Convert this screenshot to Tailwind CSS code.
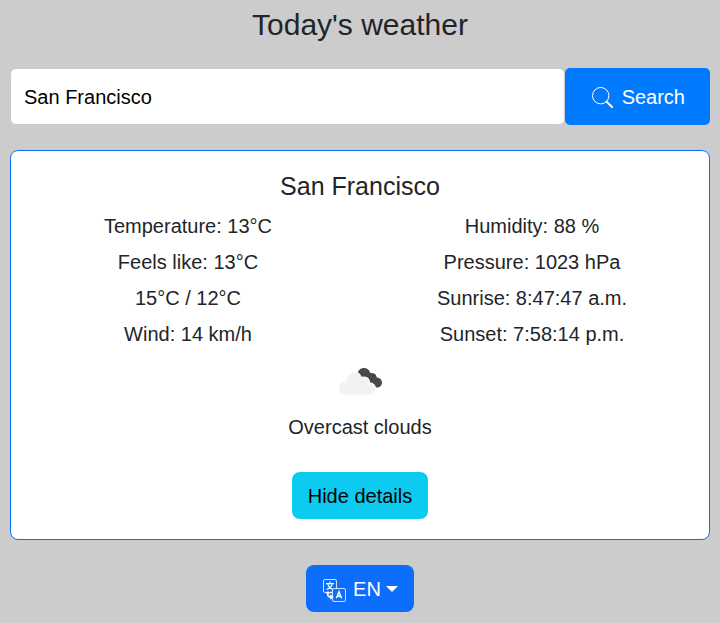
<!DOCTYPE html>
<html lang="en">
<head>
<meta charset="utf-8">
<meta name="viewport" content="width=device-width, initial-scale=1">
<title>Today's weather</title>
<script src="https://cdn.jsdelivr.net/npm/@tailwindcss/browser@4"></script>
</head>
<body class="min-h-screen bg-[#ccc] px-2.5 pt-[7px] pb-2.5 font-['Liberation_Sans',Arial,sans-serif] text-xl text-[#212529]">
  <h1 class="text-center text-[30px] leading-9">Today's weather</h1>

  <form class="mt-[25px] flex items-stretch">
    <input type="text" aria-label="City" value="San Francisco" class="min-w-0 flex-1 rounded-md border border-[#ccc] bg-white px-[13px] text-xl text-black outline-none">
    <button type="button" class="flex h-[57px] items-center gap-[9px] rounded-[5px] bg-[#007bff] pr-[25px] pl-[27px] text-white">
      <svg class="mt-0.5 size-[21px]" viewBox="0 0 21 21" fill="none" stroke="currentColor" aria-hidden="true">
        <circle cx="8.7" cy="8.7" r="8.2" stroke-width="1"/>
        <path d="M14.6 14.6 20 20" stroke-width="2" stroke-linecap="round"/>
      </svg>
      <span>Search</span>
    </button>
  </form>

  <main class="mt-[25px] rounded-lg border border-[#0d6efd] bg-white px-[5px] py-5 text-center">
    <h2 class="text-[25px] leading-[30px]">San Francisco</h2>
    <div class="mt-[7px] grid grid-cols-2 leading-9">
      <div>
        <p>Temperature: 13°C</p>
        <p>Feels like: 13°C</p>
        <p>15°C / 12°C</p>
        <p>Wind: 14 km/h</p>
      </div>
      <div>
        <p>Humidity: 88 %</p>
        <p>Pressure: 1023 hPa</p>
        <p>Sunrise: 8:47:47 a.m.</p>
        <p>Sunset: 7:58:14 p.m.</p>
      </div>
    </div>
    <svg class="mx-auto mt-4 h-[27px] w-11" viewBox="-1 0 44 27" role="img" aria-label="Overcast clouds">
      <path fill="#48484a" d="M18 6.500C19 2 22 0 25 0c3 0 5.300 1.800 6.300 5 3.500-.4 6 1 6.500 4.500 3 .2 5.200 2.200 5.200 4.900 0 3-2.200 5-5.200 5-3 0-4.800-.9-5.800-2.400L18 8z"/>
      <path fill="#f2f2f2" stroke="#fff" stroke-width="1.600" paint-order="stroke" d="M7 26.500c-4 0-7-2.900-7-6.700 0-4 3-6.800 7.500-6.800C8 7.500 11 4.300 15.500 4.300c3.500 0 5.500 2 6.700 5.500 1-.5 2-.8 3-.5 3 .2 5 2.500 5.200 5.700 3.500.2 6 2.500 6 5.800 0 3.300-2.500 5.700-6.200 5.700z"/>
    </svg>
    <p class="mt-[17px] leading-[30px]">Overcast clouds</p>
    <button type="button" class="mt-[30px] block h-[47px] mx-auto rounded-lg bg-[#0dcaf0] px-4 text-black">Hide details</button>
  </main>

  <button type="button" aria-haspopup="menu" class="mx-auto mt-[25px] flex h-[47px] items-center rounded-lg bg-[#0d6efd] px-4 text-white">
    <svg class="mt-[3px] ml-px size-[23px]" viewBox="0 0 23 23" fill="none" stroke="currentColor" stroke-width="1" aria-hidden="true">
      <path stroke-opacity=".8" d="M4 13.500H2A1.500 1.500 0 0 1 .5 12V2A1.500 1.500 0 0 1 2 .5h10A1.500 1.500 0 0 1 13.500 2v7.500"/>
      <rect x="9.500" y="9.500" width="13" height="13" rx="1.500" stroke-opacity=".8"/>
      <path stroke-width="1.200" d="M7 2.500v1.800M3 4.700h8M4.800 4.900C5.500 7.500 7.500 9.500 10 10.500M9.200 4.900C8.500 7.500 6.500 9.500 3.500 10.500"/>
      <path stroke-width="1.500" d="M13.400 19.200 16 12.800l2.600 6.400M14.300 17.200h3.400"/>
      <path stroke-width="1.500" d="M4.700 13.500v1.500c0 2 1 3 2.500 3h2M3.500 14.500l1.500-1.500 1.500 1.500M7.200 16l2.300 2-2.300 1.800M7 13.500h2"/>
    </svg>
    <span class="ml-[7px]">EN</span>
    <svg class="ml-[5px] h-1.5 w-3" viewBox="0 0 12 6" fill="currentColor" aria-hidden="true"><path d="M0 0h12L6 6z"/></svg>
  </button>
</body>
</html>
